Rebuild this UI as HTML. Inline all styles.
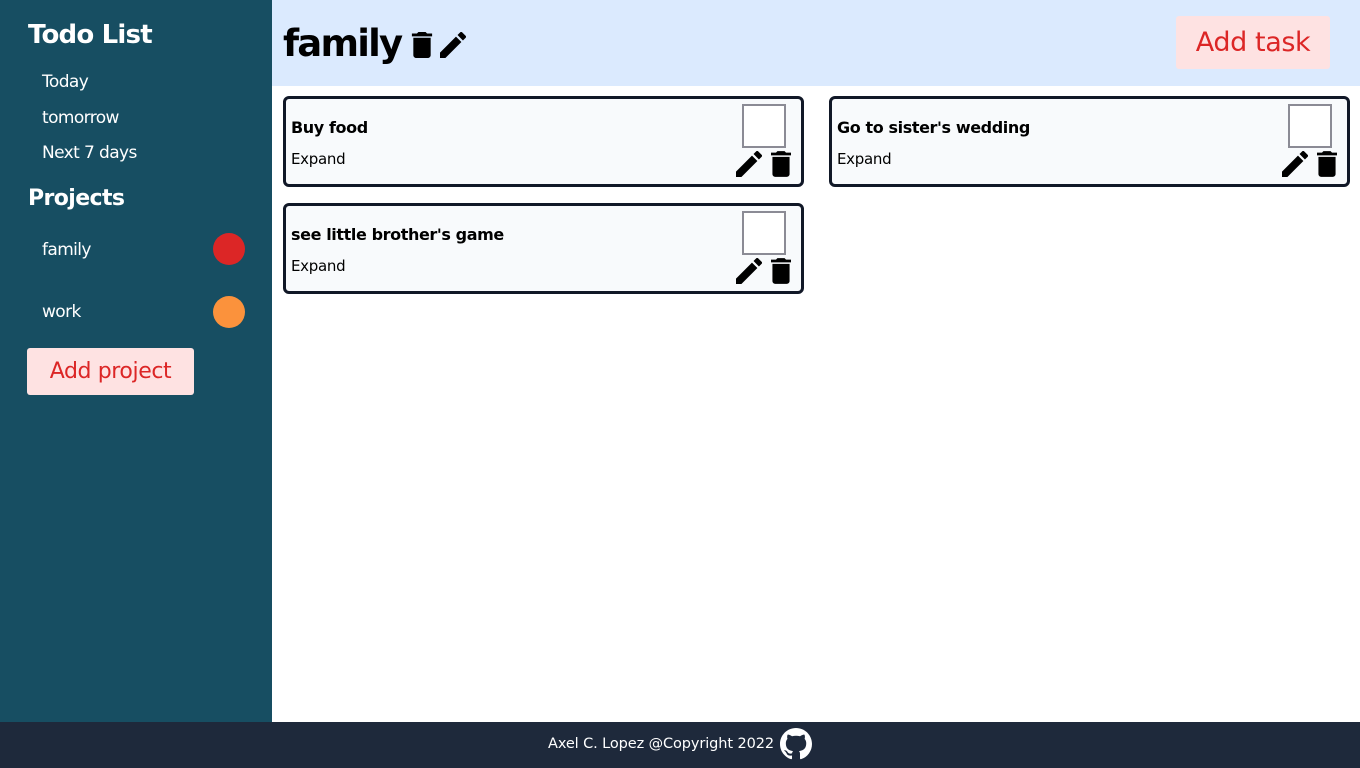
<!DOCTYPE html>
<html><head><meta charset="utf-8"><style>
*{box-sizing:border-box;margin:0;padding:0}
body{width:1360px;height:768px;overflow:hidden;font-family:"DejaVu Sans","Liberation Sans",sans-serif;position:relative;background:#fff}
.side{position:absolute;left:0;top:0;width:272px;height:722px;background:#174e62;color:#fff}
.side h1{position:absolute;left:28px;top:20px;font-size:26px;font-weight:bold;letter-spacing:-0.8px}
.side h2{position:absolute;left:28px;top:186px;font-size:22px;font-weight:bold;letter-spacing:-0.6px}
.side .it{position:absolute;left:42px;font-size:17px;letter-spacing:-0.6px}
.dot{position:absolute;left:213px;width:32px;height:32px;border-radius:50%}
.btn{position:absolute;background:#fee2e2;color:#dc2626;border-radius:3px;text-align:center;letter-spacing:-0.4px}
.head{position:absolute;left:272px;top:0;width:1088px;height:86px;background:#dbeafe}
.head h1{position:absolute;left:11px;top:22px;font-size:37px;font-weight:bold;letter-spacing:-1.8px;width:118px}
.card{position:absolute;width:521px;height:91px;border:3px solid #111827;border-radius:6px;background:#f8fafc}
.card b{position:absolute;left:5px;top:19px;font-size:16px;letter-spacing:-0.4px}
.card span{position:absolute;left:5px;top:51px;font-size:15px;letter-spacing:-0.3px}
.cb{position:absolute;left:456px;top:5px;width:44px;height:44px;border:2px solid #8b8b95;background:#fff}
.card svg{position:absolute;top:52px}
.foot{position:absolute;left:0;top:722px;width:1360px;height:46px;background:#1e293b;color:#fff;font-size:14.5px}
</style></head><body>
<div class="side">
<h1>Todo List</h1>
<div class="it" style="top:72px">Today</div>
<div class="it" style="top:108px">tomorrow</div>
<div class="it" style="top:143px">Next 7 days</div>
<h2>Projects</h2>
<div class="it" style="top:240px">family</div><div class="dot" style="top:233px;background:#dc2626"></div>
<div class="it" style="top:302px">work</div><div class="dot" style="top:296px;background:#fb923c"></div>
<div class="btn" style="left:27px;top:348px;width:167px;height:47px;line-height:47px;font-size:22px">Add project</div>
</div>
<div class="head">
<h1>family</h1>
<svg style="position:absolute;left:139px;top:32px" width="22" height="26" viewBox="5 3 14 18"><path d="M6 19c0 1.1.9 2 2 2h8c1.1 0 2-.9 2-2V7H6v12zM19 4h-3.5l-1-1h-5l-1 1H5v2h14V4z"/></svg>
<svg style="position:absolute;left:168px;top:32px" width="26" height="26" viewBox="3 3 18 18"><path d="M3 17.25V21h3.75L17.81 9.94l-3.75-3.750L3 17.25zM20.71 7.04a1 1 0 000-1.41l-2.34-2.34a1 1 0 00-1.41 0l-1.83 1.83 3.75 3.75 1.83-1.83z"/></svg>
<div class="btn" style="left:904px;top:16px;width:154px;height:53px;line-height:53px;font-size:27px">Add task</div>
</div>
<div class="card" style="left:283px;top:96px"><b>Buy food</b><span>Expand</span><div class="cb"></div>
<svg style="left:450px" width="26" height="26" viewBox="3 3 18 18"><path d="M3 17.25V21h3.75L17.81 9.94l-3.75-3.75L3 17.25zM20.71 7.04a1 1 0 000-1.41l-2.34-2.34a1 1 0 00-1.41 0l-1.83 1.83 3.75 3.75 1.83-1.83z"/></svg>
<svg style="left:485px" width="20" height="26" viewBox="5 3 14 18"><path d="M6 19c0 1.1.9 2 2 2h8c1.1 0 2-.9 2-2V7H6v12zM19 4h-3.5l-1-1h-5l-1 1H5v2h14V4z"/></svg></div>
<div class="card" style="left:829px;top:96px"><b>Go to sister's wedding</b><span>Expand</span><div class="cb"></div>
<svg style="left:450px" width="26" height="26" viewBox="3 3 18 18"><path d="M3 17.25V21h3.75L17.81 9.94l-3.75-3.75L3 17.25zM20.71 7.04a1 1 0 000-1.41l-2.34-2.34a1 1 0 00-1.41 0l-1.83 1.83 3.75 3.75 1.83-1.83z"/></svg>
<svg style="left:485px" width="20" height="26" viewBox="5 3 14 18"><path d="M6 19c0 1.1.9 2 2 2h8c1.1 0 2-.9 2-2V7H6v12zM19 4h-3.5l-1-1h-5l-1 1H5v2h14V4z"/></svg></div>
<div class="card" style="left:283px;top:203px"><b>see little brother's game</b><span>Expand</span><div class="cb"></div>
<svg style="left:450px" width="26" height="26" viewBox="3 3 18 18"><path d="M3 17.25V21h3.75L17.81 9.94l-3.75-3.75L3 17.25zM20.71 7.04a1 1 0 000-1.41l-2.34-2.34a1 1 0 00-1.41 0l-1.83 1.83 3.75 3.75 1.83-1.83z"/></svg>
<svg style="left:485px" width="20" height="26" viewBox="5 3 14 18"><path d="M6 19c0 1.1.9 2 2 2h8c1.1 0 2-.9 2-2V7H6v12zM19 4h-3.5l-1-1h-5l-1 1H5v2h14V4z"/></svg></div>
<div class="foot">
<div style="position:absolute;left:548px;top:14px;letter-spacing:-0.1px">Axel C. Lopez @Copyright 2022</div>
<svg style="position:absolute;left:780px;top:6px" width="32" height="32" viewBox="0 0 16 16"><path fill="#fff" d="M8 0C3.58 0 0 3.58 0 8c0 3.54 2.29 6.53 5.47 7.59.4.07.55-.17.55-.38 0-.19-.01-.82-.01-1.49-2.01.37-2.53-.49-2.69-.94-.09-.23-.48-.94-.82-1.13-.28-.15-.68-.52-.01-.53.63-.01 1.08.58 1.23.82.72 1.21 1.87.87 2.33.66.07-.52.28-.87.51-1.07-1.78-.2-3.64-.89-3.64-3.95 0-.87.31-1.59.82-2.15-.08-.2-.36-1.02.08-2.12 0 0 .67-.21 2.2.82.64-.18 1.32-.27 2-.27.68 0 1.36.09 2 .27 1.53-1.04 2.2-.82 2.2-.82.44 1.1.16 1.92.08 2.12.51.56.82 1.27.82 2.15 0 3.07-1.87 3.75-3.65 3.95.29.25.54.73.54 1.48 0 1.07-.01 1.930-.01 2.2 0 .21.15.46.55.38A8.013 8.013 0 0016 8c0-4.42-3.58-8-8-8z"/></svg>
</div>
</body></html>
